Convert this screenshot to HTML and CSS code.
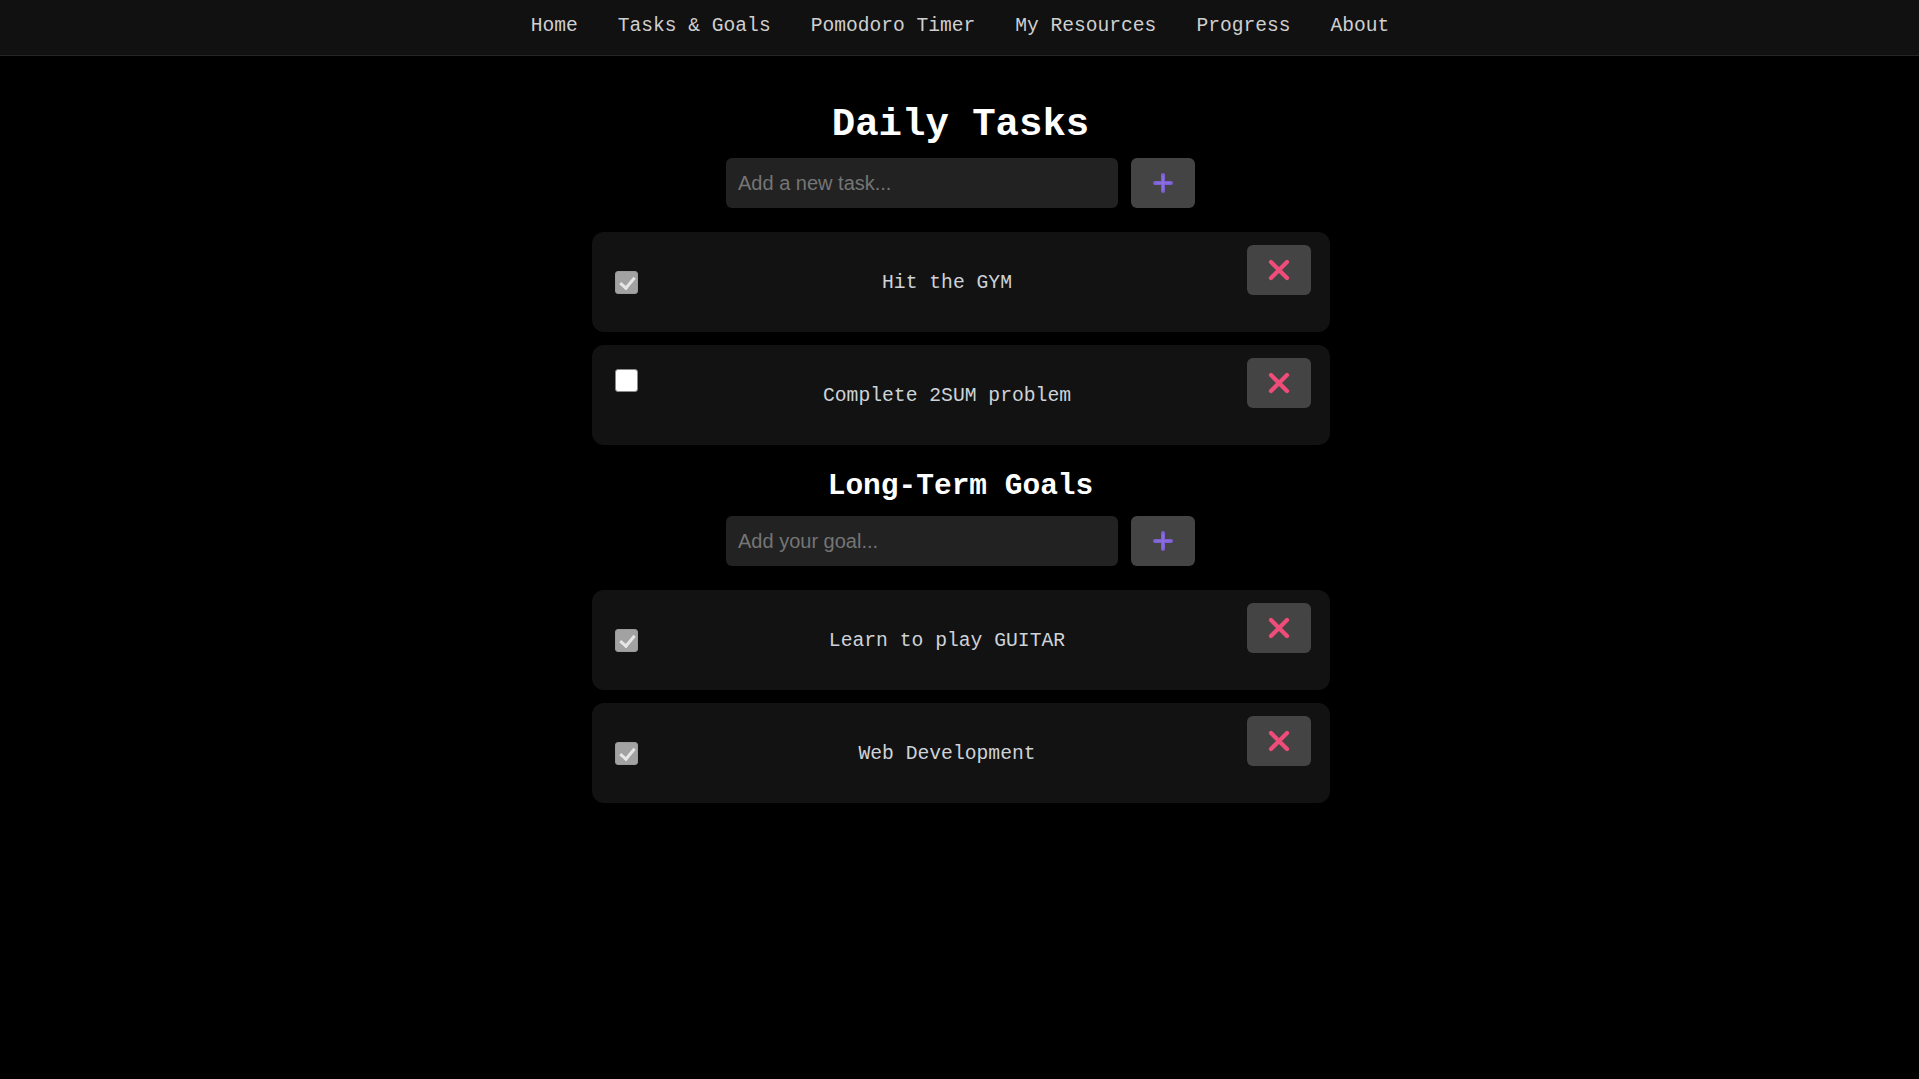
FILE: index.html
```html
<!DOCTYPE html>
<html lang="en">
<head>
<meta charset="utf-8">
<title>Tasks &amp; Goals</title>
<link rel="stylesheet" href="styles.css">
</head>
<body>
<nav class="topnav">
  <ul class="nav-list">
    <li><a href="#">Home</a></li>
    <li><a href="#">Tasks &amp; Goals</a></li>
    <li><a href="#">Pomodoro Timer</a></li>
    <li><a href="#">My Resources</a></li>
    <li><a href="#">Progress</a></li>
    <li><a href="#">About</a></li>
  </ul>
</nav>
<main class="page">
  <section class="block">
    <h1 class="title">Daily Tasks</h1>
    <form class="add-row">
      <input class="add-input" type="text" placeholder="Add a new task...">
      <button class="add-btn" type="button" aria-label="Add">
        <svg width="20" height="20" viewBox="0 0 20 20"><path d="M10 2v16M2 10h16" stroke="#7d5ed4" stroke-width="4" stroke-linecap="round"/><path d="M10 3v14M3 10h14" stroke="#9b82e4" stroke-width="1.2" stroke-linecap="round" opacity=".7"/></svg>
      </button>
    </form>
    <ul class="items">
      <li class="item">
        <input class="check is-checked" type="checkbox" checked>
        <span class="item-text">Hit the GYM</span>
        <button class="del-btn" type="button" aria-label="Delete">
          <svg width="22" height="22" viewBox="0 0 22 22"><path d="M3 3l16 16M19 3L3 19" stroke="#f04c7a" stroke-width="4.2" stroke-linecap="round"/></svg>
        </button>
      </li>
      <li class="item">
        <input class="check is-open" type="checkbox">
        <span class="item-text">Complete 2SUM problem</span>
        <button class="del-btn" type="button" aria-label="Delete">
          <svg width="22" height="22" viewBox="0 0 22 22"><path d="M3 3l16 16M19 3L3 19" stroke="#f04c7a" stroke-width="4.2" stroke-linecap="round"/></svg>
        </button>
      </li>
    </ul>
  </section>
  <section class="block">
    <h2 class="subtitle">Long-Term Goals</h2>
    <form class="add-row">
      <input class="add-input" type="text" placeholder="Add your goal...">
      <button class="add-btn" type="button" aria-label="Add">
        <svg width="20" height="20" viewBox="0 0 20 20"><path d="M10 2v16M2 10h16" stroke="#7d5ed4" stroke-width="4" stroke-linecap="round"/><path d="M10 3v14M3 10h14" stroke="#9b82e4" stroke-width="1.2" stroke-linecap="round" opacity=".7"/></svg>
      </button>
    </form>
    <ul class="items">
      <li class="item">
        <input class="check is-checked" type="checkbox" checked>
        <span class="item-text">Learn to play GUITAR</span>
        <button class="del-btn" type="button" aria-label="Delete">
          <svg width="22" height="22" viewBox="0 0 22 22"><path d="M3 3l16 16M19 3L3 19" stroke="#f04c7a" stroke-width="4.2" stroke-linecap="round"/></svg>
        </button>
      </li>
      <li class="item">
        <input class="check is-checked" type="checkbox" checked>
        <span class="item-text">Web Development</span>
        <button class="del-btn" type="button" aria-label="Delete">
          <svg width="22" height="22" viewBox="0 0 22 22"><path d="M3 3l16 16M19 3L3 19" stroke="#f04c7a" stroke-width="4.2" stroke-linecap="round"/></svg>
        </button>
      </li>
    </ul>
  </section>
</main>
</body>
</html>
```

FILE: styles.css
```css
* {
  box-sizing: border-box;
}

html, body {
  margin: 0;
  padding: 0;
  background: #000;
  color: #ddd;
  font-family: "Liberation Mono", "Courier New", monospace;
}

.topnav {
  background: #111;
  border-bottom: 1px solid #262626;
  height: 56px;
  padding-top: 15px;
  padding-left: 1px;
}

.nav-list {
  list-style: none;
  margin: 0;
  padding: 0;
  display: flex;
  justify-content: center;
  gap: 40px;
}

.nav-list a {
  color: #cfcfcf;
  text-decoration: none;
  font-size: 19.6px;
  line-height: 23px;
}

.page {
  display: flex;
  flex-direction: column;
  align-items: center;
  padding-left: 2px;
}

.block {
  display: flex;
  flex-direction: column;
  align-items: center;
  width: 738px;
}

.title {
  margin: 47px 0 11px;
  font-size: 39px;
  line-height: 44px;
  font-weight: bold;
  color: #fff;
}

.subtitle {
  margin: 24px 0 13px;
  font-size: 29.5px;
  line-height: 34px;
  font-weight: bold;
  color: #fff;
}

.add-row {
  display: flex;
  gap: 13px;
  margin: 0 0 24px;
}

.add-input {
  width: 392px;
  height: 50px;
  background: #222;
  border: none;
  border-radius: 6px;
  padding: 0 12px;
  font-family: "Liberation Sans", Arial, sans-serif;
  font-size: 20px;
  color: #eee;
  outline: none;
}

.add-input::placeholder {
  color: #757575;
}

.add-btn,
.del-btn {
  width: 64px;
  height: 50px;
  background: #444;
  border: none;
  border-radius: 6px;
  display: flex;
  align-items: center;
  justify-content: center;
  padding: 0;
  cursor: pointer;
}

.items {
  list-style: none;
  margin: 0;
  padding: 0;
  width: 100%;
  display: flex;
  flex-direction: column;
  gap: 13px;
}

.item {
  display: flex;
  align-items: flex-start;
  background: #121212;
  border-radius: 12px;
  padding: 13px 19px 13px 23px;
  height: 100px;
}

.item-text {
  flex: 1;
  text-align: center;
  font-size: 19.7px;
  line-height: 24px;
  padding-top: 26px;
  color: #cdd3d8;
}

.check {
  -webkit-appearance: none;
  appearance: none;
  width: 23px;
  height: 23px;
  margin: 0 10px 0 0;
  border-radius: 3px;
  position: relative;
  flex: none;
}

.check.is-checked {
  align-self: center;
  background: #a2a2a2;
  border: 1px solid #9a9a9a;
}

.check.is-checked::before {
  content: "";
  position: absolute;
  left: 7px;
  top: 2px;
  width: 6px;
  height: 12px;
  border-right: 3.5px solid #e6e6e6;
  border-bottom: 3.5px solid #e6e6e6;
  transform: rotate(40deg);
}

.check.is-open {
  margin-top: 11px;
  background: #fff;
  border: 1.5px solid #8a8a8a;
}
```
